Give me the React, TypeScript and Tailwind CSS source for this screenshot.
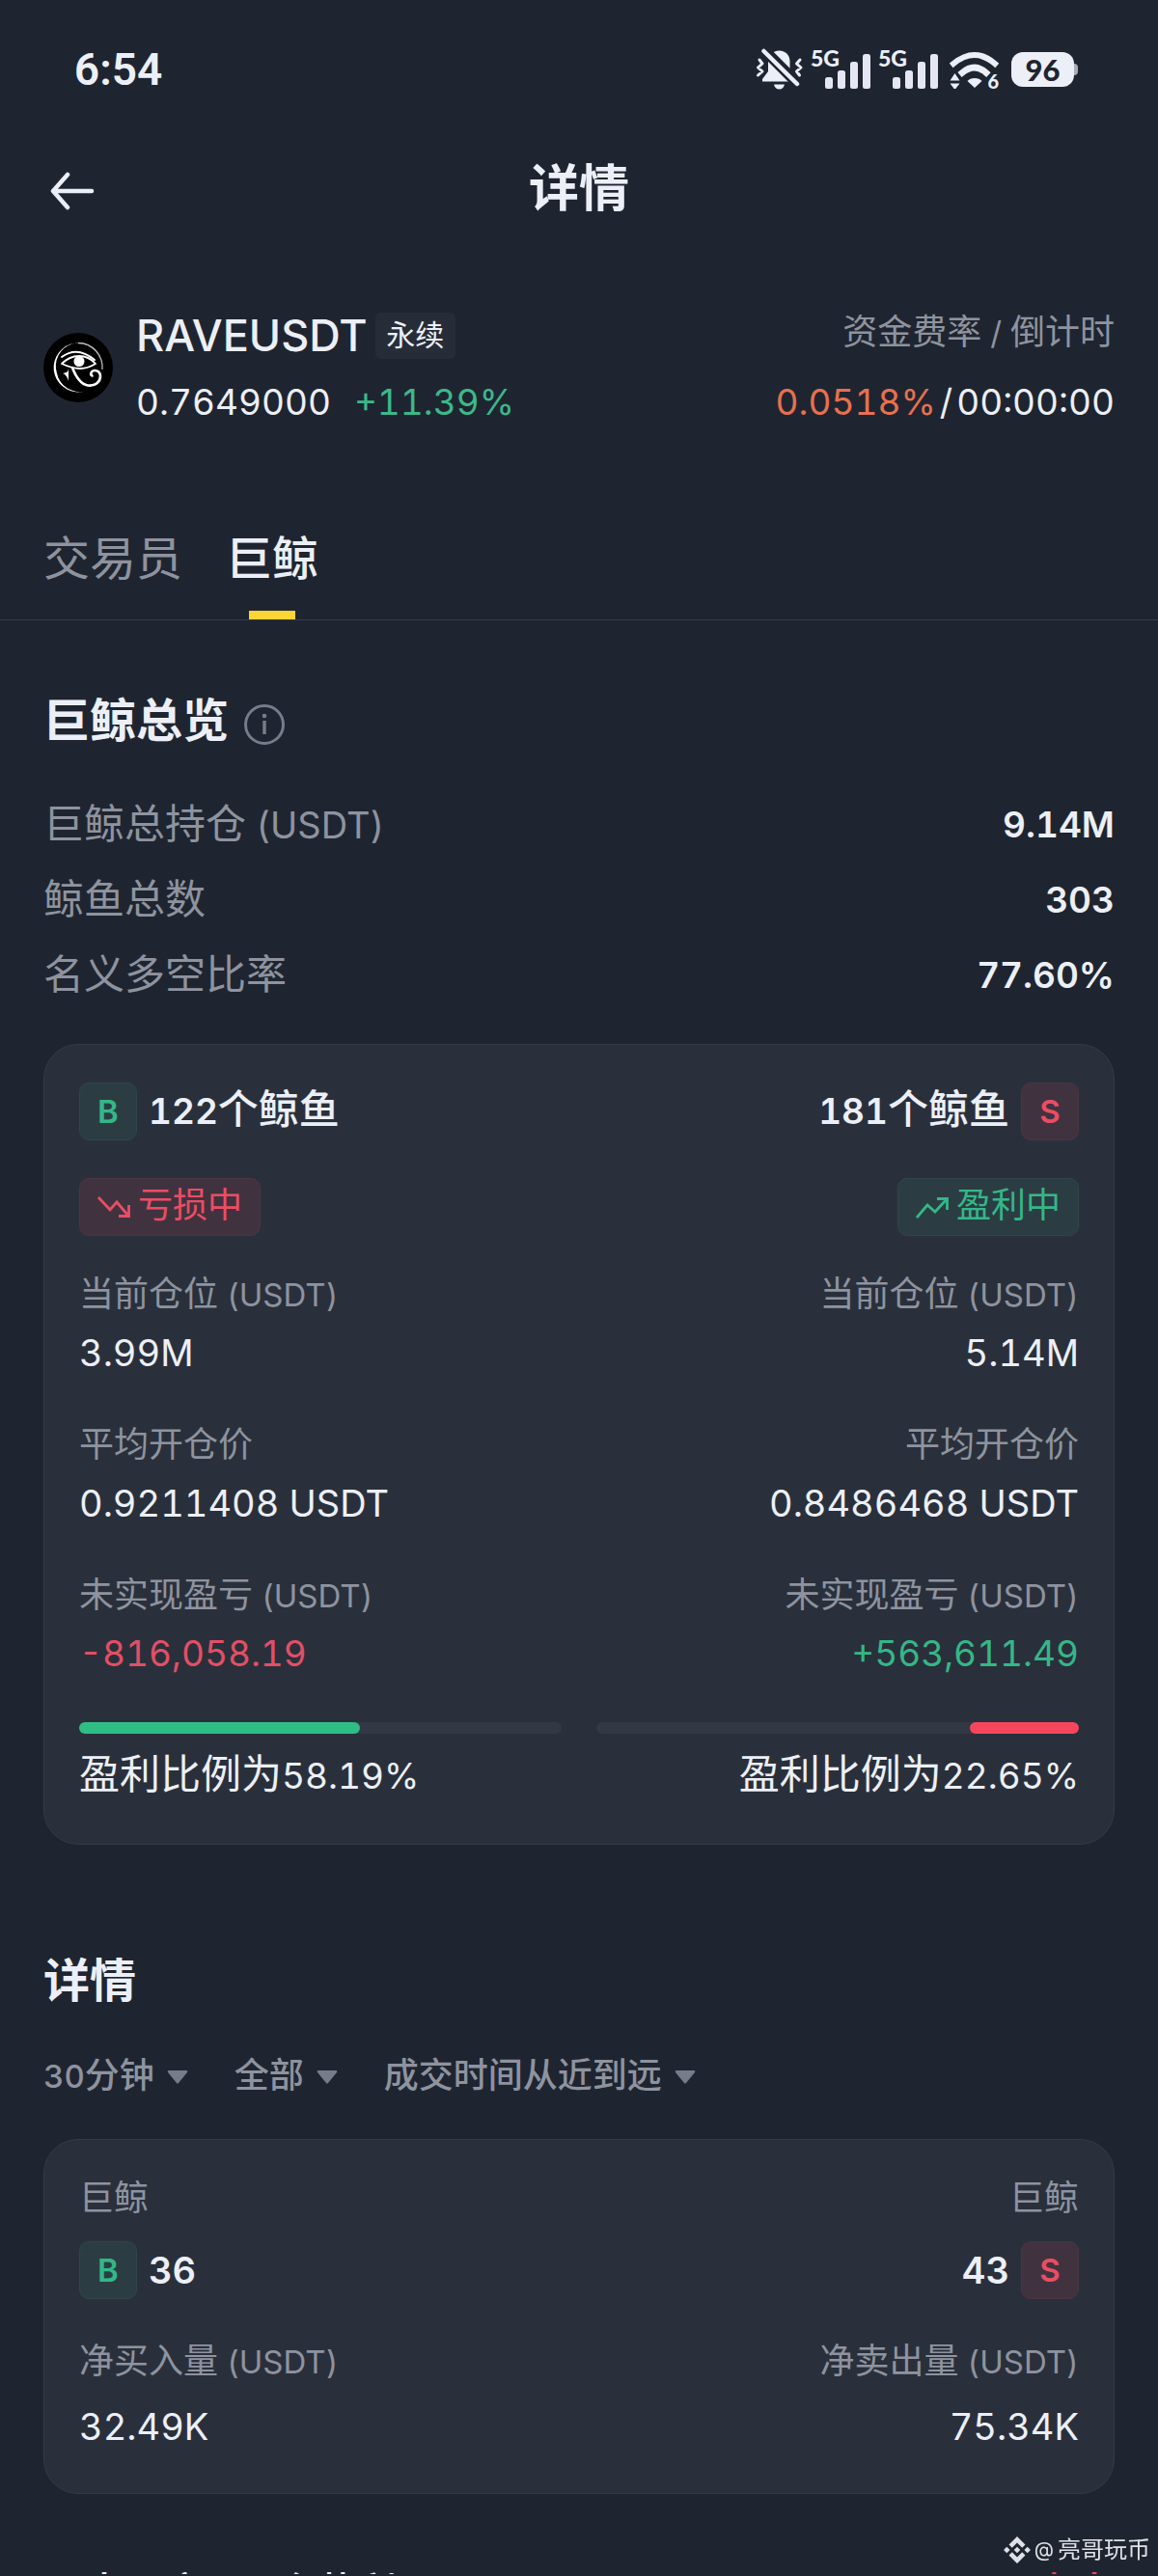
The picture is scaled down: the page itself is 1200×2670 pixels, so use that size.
import React from "react";

function Latin({ children }: { children: React.ReactNode }) {
  return <span className="text-[33px] leading-none">{children}</span>;
}

function BellOff() {
  return (
    <svg viewBox="0 0 50 44" className="h-11 w-[50px]" aria-hidden="true">
      <path d="M24.5 2.5c7 0 11 5 11 11v8l5 10.5v2.5H7v-2.500L13 24V13.500c0-6 4.500-11 11.500-11z" fill="#eceff8" />
      <path d="M19 37.500h11c-.8 3.200-2.700 5-5.500 5s-4.700-1.800-5.500-5z" fill="#eceff8" />
      <path d="M5.500 -1.500L44 37" stroke="#1f2530" strokeWidth="11" />
      <path d="M8.500 3L43 37" stroke="#eceff8" strokeWidth="4.500" strokeLinecap="round" />
      <path d="M4 12l3 4-4.500 4 4.500 4-4.500 4M46 12l-3.500 4 4.500 4-4.500 4 3 4" stroke="#eceff8" strokeWidth="3" fill="none" strokeLinecap="round" strokeLinejoin="round" />
    </svg>
  );
}

function Signal() {
  return (
    <span className="relative block h-10 w-[62px]">
      <svg viewBox="0 0 62 40" className="h-10 w-[62px]" fill="#e4e7f3" aria-hidden="true">
        <rect x="15" y="28" width="8" height="12" rx="2.500" />
        <rect x="28" y="21" width="8" height="19" rx="2.500" />
        <rect x="41" y="12" width="8" height="28" rx="2.500" />
        <rect x="54" y="4" width="8" height="36" rx="2.500" />
      </svg>
      <span className="absolute left-0 top-0 font-[Lato] text-[23px] leading-4 font-black">5G</span>
    </span>
  );
}

function Wifi() {
  return (
    <span className="relative block h-10 w-[51px]">
      <svg viewBox="0 0 51 40" className="h-10 w-[51px]" fill="none" stroke="#eceff8" aria-hidden="true">
        <path d="M4 14Q26 -4 47 14" strokeWidth="6" strokeLinecap="square" />
        <path d="M13 23.500Q26 12.500 38 23.500" strokeWidth="6.500" strokeLinecap="square" />
        <path d="M26 29q5 0 7.500 3l-7.500 7-7.500-7q2.500-3 7.500-3z" fill="#eceff8" stroke="none" />
        <path d="M5.500 24l5 7.500h-10zM5.500 41l-5-6.500h10z" fill="#eceff8" stroke="none" />
      </svg>
      <span className="absolute right-0 bottom-0 font-[Lato] text-[20px] leading-4 font-black">6</span>
    </span>
  );
}

function StatusBar() {
  return (
    <div className="flex h-36 items-center justify-between pl-[77px] pr-[83px]">
      <span className="font-[Roboto] text-[46px] leading-none font-semibold">6:54</span>
      <div className="flex items-center">
        <BellOff />
        <div className="ml-[7px] flex gap-2">
          <Signal />
          <Signal />
        </div>
        <div className="ml-3">
          <Wifi />
        </div>
        <div className="ml-[13px] flex items-center">
          <span className="flex h-9 w-[65px] items-center justify-center rounded-xl bg-[#eceff8] font-[Lato] text-[31px] leading-none font-black text-[#1f2530]">96</span>
          <span className="h-3 w-1 rounded-r-sm bg-[#a9adb7]" />
        </div>
      </div>
    </div>
  );
}

function CoinLogo() {
  return (
    <svg viewBox="0 0 72 72" className="h-[72px] w-[72px] shrink-0" fill="none" aria-label="RAVE" role="img">
      <circle cx="36" cy="36" r="36" fill="#000" />
      <path d="M60 27A25.500 25.500 0 1 0 43 60.500A24 24 0 0 1 14 42A24 24 0 0 1 60 27z" fill="#fff" />
      <path d="M36 10.500A25.500 25.500 0 0 1 61 38" stroke="#bbb" strokeWidth="1.300" />
      <path d="M19 25q16-12 34 3" stroke="#fff" strokeWidth="2" strokeLinecap="round" />
      <path d="M19 32q8-8 18-8t17 8q-8 5-16 5t-19-5z" stroke="#fff" strokeWidth="1.800" strokeLinejoin="round" />
      <circle cx="37" cy="29.500" r="5.500" fill="#fff" />
      <path d="M26 36c0 5-2 5-6 6 3 1 5 4 6 8z" fill="#fff" />
      <path d="M30 36c3 8 8 17 16 18.500 8 1 13-4 13-9.500 0-4-3-6.500-6.500-6-3 .5-4.500 4-2 5.500" stroke="#fff" strokeWidth="2.600" strokeLinecap="round" />
    </svg>
  );
}

function TrendIcon({ up }: { up?: boolean }) {
  return (
    <svg viewBox="0 0 34 24" className="h-6 w-[34px]" fill="none" stroke="currentColor" strokeWidth="2.800" aria-hidden="true">
      {up ? <path d="M1 23L12 10l8 7L32 4M22 3.500h10.500V15" /> : <path d="M1 2l12 13 7-8 12 14M22 21.500h10.500V10" />}
    </svg>
  );
}

type Side = "buy" | "sell";

function SideBadge({ side }: { side: Side }) {
  return side === "buy" ? (
    <span className="flex size-[60px] items-center justify-center rounded-[10px] border border-[#2f454a] bg-[#2b3d43] text-[33px] leading-none font-semibold text-[#34b787]">B</span>
  ) : (
    <span className="flex size-[60px] items-center justify-center rounded-[10px] border border-[#4b3541] bg-[#40333f] text-[33px] leading-none font-semibold text-[#ea4d65]">S</span>
  );
}

function Status({ profit }: { profit: boolean }) {
  return profit ? (
    <span className="flex h-[60px] w-[188px] items-center justify-center gap-2 rounded-[10px] border border-[#2f454a] bg-[#2b3d43] text-[36px] leading-none text-[#34b787]">
      <TrendIcon up />
      <span className="pb-1">盈利中</span>
    </span>
  ) : (
    <span className="flex h-[60px] w-[188px] items-center justify-center gap-2 rounded-[10px] border border-[#4b3541] bg-[#40333f] text-[36px] leading-none text-[#ea4d65]">
      <TrendIcon />
      <span className="pb-1">亏损中</span>
    </span>
  );
}

function Metric({ label, unit, value, tone = "text-[38px]" }: { label: string; unit?: boolean; value: string; tone?: string }) {
  return (
    <div>
      <dt className="text-[36px] leading-[60px] text-[#8e939f]">
        {label}
        {unit && <Latin> (USDT)</Latin>}
      </dt>
      <dd className={tone + " pt-[2px] leading-[58px]"}>{value}</dd>
    </div>
  );
}

interface WhaleSide {
  side: Side;
  count: number;
  position: string;
  entry: string;
  pnl: string;
  profitable: boolean;
  ratio: number;
}

const sides: WhaleSide[] = [
  { side: "buy", count: 122, position: "3.99M", entry: "0.9211408 USDT", pnl: "-816,058.19", profitable: false, ratio: 58.19 },
  { side: "sell", count: 181, position: "5.14M", entry: "0.8486468 USDT", pnl: "+563,611.49", profitable: true, ratio: 22.65 },
];

function WhaleColumn({ data }: { data: WhaleSide }) {
  const sell = data.side === "sell";
  return (
    <div className={sell ? "flex flex-col items-end text-right" : "flex flex-col items-start"}>
      <div className={sell ? "flex flex-row-reverse items-center gap-3" : "flex items-center gap-3"}>
        <SideBadge side={data.side} />
        <span className="pb-1 text-[42px] leading-[56px] font-medium">
          <span className="text-[37px] leading-none font-semibold">{data.count}</span>个鲸鱼
        </span>
      </div>
      <div className="mt-[39px]">
        <Status profit={data.profitable} />
      </div>
      <dl className="mt-[30px] flex flex-col gap-9">
        <Metric label="当前仓位" unit value={data.position} />
        <Metric label="平均开仓价" value={data.entry} />
        <Metric label="未实现盈亏" unit value={data.pnl} tone={data.profitable ? "text-[37px] text-[#34b787]" : "text-[37px] text-[#e24f66]"} />
      </dl>
      <div className={sell ? "mt-[42px] flex h-3 w-full justify-end rounded-full bg-[#303944]" : "mt-[42px] flex h-3 w-full rounded-full bg-[#303944]"}>
        <div className={sell ? "rounded-full bg-[#f6465d]" : "rounded-full bg-[#2ebd85]"} style={{ width: `${data.ratio}%` }} />
      </div>
      <p className="mt-3 text-[42px] leading-[60px]">
        盈利比例为<span className="text-[37px] leading-none">{data.ratio.toFixed(2)}%</span>
      </p>
    </div>
  );
}

function FlowColumn({ side, count, label, value }: { side: Side; count: number; label: string; value: string }) {
  const sell = side === "sell";
  return (
    <div className={sell ? "flex flex-col items-end text-right" : "flex flex-col items-start"}>
      <p className="text-[36px] leading-[60px] text-[#8e939f]">巨鲸</p>
      <div className={sell ? "mt-[15px] flex flex-row-reverse items-center gap-3" : "mt-[15px] flex items-center gap-3"}>
        <SideBadge side={side} />
        <span className="text-[38px] leading-[60px] font-semibold">{count}</span>
      </div>
      <p className="mt-[34px] text-[36px] leading-[60px] text-[#8e939f]">
        {label}
        <Latin> (USDT)</Latin>
      </p>
      <p className="mt-2 text-[38px] leading-[60px]">{value}</p>
    </div>
  );
}

function Filter({ label, children }: { label: string; children: React.ReactNode }) {
  return (
    <button type="button" aria-label={label} aria-haspopup="listbox" className="flex items-center gap-[13px] text-[36px] leading-[60px] font-medium text-[#8e939f]">
      <span>{children}</span>
      <svg viewBox="0 0 22 14" className="mt-1 h-[14px] w-[22px]" fill="#767c8a" aria-hidden="true">
        <path d="M2 0h18q2 0 1 2l-9 11q-1 1-2 0L1 2q-1-2 1-2z" />
      </svg>
    </button>
  );
}

const overview = [
  { label: "巨鲸总持仓", unit: true, value: "9.14M" },
  { label: "鲸鱼总数", unit: false, value: "303" },
  { label: "名义多空比率", unit: false, value: "77.60%" },
];

export default function App() {
  return (
    <div className="min-h-screen overflow-hidden bg-[#1f2530] font-[Inter,'Noto_Sans_CJK_SC',sans-serif] tabular-nums text-[#eceff8]">
      <StatusBar />
      <header className="grid h-[108px] grid-cols-3 items-center px-[45px]">
        <button type="button" aria-label="返回" className="w-[60px] justify-self-start pl-[7px]">
          <svg viewBox="0 0 46 40" className="h-10 w-[46px]" fill="none" stroke="currentColor" strokeWidth="4.500" strokeLinecap="round" strokeLinejoin="round" aria-hidden="true">
            <path d="M18 3L3 20l15 17M3 20h40" />
          </svg>
        </button>
        <h1 className="pb-1 text-center text-[52px] leading-[72px] font-bold">详情</h1>
      </header>

      <section className="flex items-center justify-between px-[45px] pt-[60px]">
        <div className="flex items-center gap-6">
          <CoinLogo />
          <div>
            <div className="flex items-center gap-2">
              <h2 className="text-[45px] leading-[72px] font-medium">RAVEUSDT</h2>
              <span className="flex h-12 w-[83px] items-center justify-center rounded-md bg-[#272d38] pb-[3px] text-[30px] leading-none">永续</span>
            </div>
            <p className="flex gap-6 text-[37px] leading-[66px]">
              <span>0.7649000</span>
              <span className="text-[#3cb88a]">+11.39%</span>
            </p>
          </div>
        </div>
        <div className="text-right">
          <p className="pb-2 text-[36px] leading-[64px] text-[#8e939f]">
            资金费率<Latin> / </Latin>倒计时
          </p>
          <p className="text-[37px] leading-[66px]">
            <span className="text-[#e8704f]">0.0518%</span>
            <span className="mx-1">/</span>
            <span>00:00:00</span>
          </p>
        </div>
      </section>

      <nav className="mt-[93px] flex gap-[45px] border-b border-[#363c47] px-[45px] text-[48px] leading-[72px]">
        <button type="button" className="pb-[27px] text-[#8e939f]">交易员</button>
        <button type="button" aria-current="page" className="flex flex-col items-center font-medium">
          <span>巨鲸</span>
          <span className="mt-[18px] h-[9px] w-12 bg-[#fbd535]" />
        </button>
      </nav>

      <main className="px-[45px]">
        <section className="pt-[68px]">
          <div className="flex items-center gap-4">
            <h2 className="text-[48px] leading-[72px] font-bold">巨鲸总览</h2>
            <button type="button" aria-label="说明" className="mt-2 text-[#767c8a]">
              <svg viewBox="0 0 42 42" className="size-[42px]" fill="none" stroke="currentColor" strokeWidth="3" aria-hidden="true">
                <circle cx="21" cy="21" r="19.500" />
                <path d="M21 17v14" strokeWidth="3.500" />
                <circle cx="21" cy="12" r="2.300" fill="currentColor" stroke="none" />
              </svg>
            </button>
          </div>
          <dl className="mt-8">
            {overview.map((row) => (
              <div key={row.label} className="flex items-center justify-between leading-[78px]">
                <dt className="text-[42px] text-[#8e939f]">
                  {row.label}
                  {row.unit && <span className="text-[38px] leading-none"> (USDT)</span>}
                </dt>
                <dd className="pt-[2px] text-[37px] leading-[76px] font-semibold">{row.value}</dd>
              </div>
            ))}
          </dl>
          <div className="mt-[33px] grid grid-cols-2 gap-9 rounded-[36px] border border-[#343b46] bg-[#2a303b] px-9 pt-[39px] pb-[42px]">
            {sides.map((s) => (
              <WhaleColumn key={s.side} data={s} />
            ))}
          </div>
        </section>

        <section className="pt-[105px]">
          <h2 className="text-[48px] leading-[72px] font-bold">详情</h2>
          <div className="mt-8 flex gap-12">
            <Filter label="时间周期">
              <Latin>30</Latin>分钟
            </Filter>
            <Filter label="类型">全部</Filter>
            <Filter label="排序">成交时间从近到远</Filter>
          </div>
          <div className="mt-9 grid grid-cols-2 gap-9 rounded-[36px] border border-[#343b46] bg-[#2a303b] px-9 pt-[30px] pb-[39px]">
            <FlowColumn side="buy" count={36} label="净买入量" value="32.49K" />
            <FlowColumn side="sell" count={43} label="净卖出量" value="75.34K" />
          </div>
        </section>

        <section className="mt-[72px] flex h-[11px] justify-between overflow-hidden text-[42px] leading-[60px] font-medium">
          <p className="flex gap-[72px]">
            <span>巨大买家</span>
            <span>个获利</span>
          </p>
          <p className="text-[#f6465d]">卖出</p>
        </section>
      </main>

      <footer className="fixed right-2 bottom-3 flex items-center gap-1 text-[24px] leading-[30px] text-[#dfe1e6]">
        <svg viewBox="0 0 28 28" className="size-7" fill="currentColor" aria-hidden="true">
          <path d="M14 0l8.500 8.500-3.300 3.300L14 6.600l-5.200 5.200-3.300-3.300zM14 28l-8.500-8.500 3.300-3.300 5.200 5.200 5.200-5.200 3.300 3.300zM3.300 10.700L6.600 14l-3.300 3.300L0 14zM24.700 10.700L28 14l-3.300 3.300-3.300-3.300zM14 10.700l3.300 3.300-3.300 3.300-3.300-3.300z" />
        </svg>
        <span className="text-[21px]">@</span>
        <span>亮哥玩币</span>
      </footer>
    </div>
  );
}
